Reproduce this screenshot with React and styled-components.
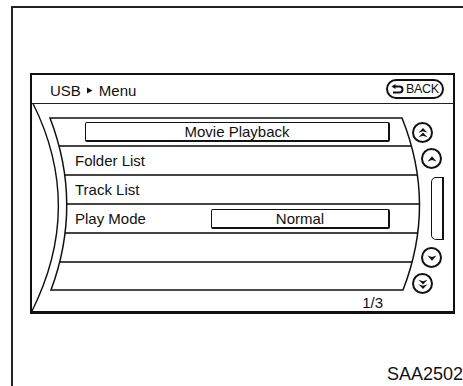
import styled, { createGlobalStyle } from "styled-components";

const GlobalStyle = createGlobalStyle`
  html, body { margin: 0; padding: 0; background: #fff; }
  body { font-family: "Liberation Sans", Arial, sans-serif; color: #111; }
`;

const rows = [
  { label: "", value: "Movie Playback", width: 305 },
  { label: "Folder List" },
  { label: "Track List" },
  { label: "Play Mode", value: "Normal", width: 179 },
  { label: "" },
  { label: "" },
];

function Arrow({ double, down }) {
  return (
    <svg width="12" height="12" viewBox="0 0 12 12" style={{ transform: down ? "rotate(180deg)" : "none" }}>
      {double ? (
        <>
          <path d="M6 1 L10.5 5.8 L6 4.3 L1.5 5.8 Z" fill="#111" />
          <path d="M6 5.5 L10.5 10.3 L6 8.8 L1.5 10.3 Z" fill="#111" />
        </>
      ) : (
        <path d="M6 3.2 L10.5 8.6 L6 7 L1.5 8.6 Z" fill="#111" />
      )}
    </svg>
  );
}

function BackIcon() {
  return (
    <svg width="13" height="11" viewBox="0 0 13 11">
      <path d="M4 2.5 H8.5 A3 3 0 0 1 8.5 8.5 H2" fill="none" stroke="#111" strokeWidth="2" />
      <path d="M0.5 2.5 L4.5 0 L4.5 5 Z" fill="#111" />
    </svg>
  );
}

export default function App() {
  return (
    <Page>
      <GlobalStyle />
      <Frame>
        <Screen>
          <Header>
            <Crumb>
              USB
              <svg width="6" height="7" viewBox="0 0 6 7" style={{ margin: "0 6px" }}>
                <path d="M0 0.5 L5.5 3.5 L0 6.5 Z" fill="#111" />
              </svg>
              Menu
            </Crumb>
            <BackButton>
              <BackIcon />
              BACK
            </BackButton>
          </Header>
          <Body>
            <List>
              {rows.map((r, i) => (
                <Row key={i}>
                  {r.label}
                  {r.value && <ValueBox $width={r.width}>{r.value}</ValueBox>}
                </Row>
              ))}
            </List>
            <PageCount>1/3</PageCount>
            <ScrollColumn>
              <ScrollButton $x={0} $gap={0}><Arrow double /></ScrollButton>
              <ScrollButton $x={9} $gap={5}><Arrow /></ScrollButton>
              <ScrollTrack />
              <ScrollButton $x={9} $gap={7}><Arrow down /></ScrollButton>
              <ScrollButton $x={0} $gap={5}><Arrow double down /></ScrollButton>
            </ScrollColumn>
          </Body>
          <Outline viewBox="32 75 421 236">
            <path d="M33 103.5 Q84.5 207 31.5 312" fill="none" stroke="#111" strokeWidth="1.4" />
            <path d="M50 118 L402 118 Q436.5 204 403 290 L51 290 Q83 204 50 118 Z" fill="none" stroke="#111" strokeWidth="1.5" />
          </Outline>
        </Screen>
        <Caption>SAA2502</Caption>
      </Frame>
    </Page>
  );
}

const Page = styled.div`
  width: 463px;
  height: 386px;
  box-sizing: border-box;
  padding: 6px 0 0 11px;
  overflow: hidden;
  background: #fff;
`;

const Frame = styled.div`
  height: 380px;
  box-sizing: border-box;
  border-top: 2px solid #222;
  border-left: 2px solid #222;
  padding: 65px 0 0 17px;
  display: flex;
  flex-direction: column;
`;

const Screen = styled.div`
  position: relative;
  width: 425px;
  height: 241px;
  box-sizing: border-box;
  border: 2px solid #111;
  border-bottom-width: 3px;
  display: flex;
  flex-direction: column;
`;

const Header = styled.div`
  height: 28px;
  flex-shrink: 0;
  border-bottom: 1px solid #222;
  display: flex;
  align-items: center;
  justify-content: space-between;
  padding: 0 9px 0 18px;
`;

const Crumb = styled.div`
  display: flex;
  align-items: center;
  font-size: 15px;
  padding-top: 2px;
`;

const BackButton = styled.div`
  height: 20px;
  width: 58px;
  box-sizing: border-box;
  border: 2px solid #111;
  border-radius: 10px;
  display: flex;
  align-items: center;
  gap: 2px;
  padding-left: 3px;
  font-size: 12.5px;
  letter-spacing: -0.3px;
`;

const Body = styled.div`
  flex: 1;
  display: grid;
  grid-template-columns: 370px auto;
  grid-template-rows: 172px auto;
  align-content: start;
  padding: 14px 0 0 18px;
`;

const List = styled.div`
  grid-column: 1;
  grid-row: 1;
  display: flex;
  flex-direction: column;
  clip-path: path("M0 0 L352 0 Q386.5 86 353 172 L1 172 Q33 86 0 0 Z");
`;

const Row = styled.div`
  flex: 1;
  display: flex;
  align-items: center;
  padding: 0 30px 0 25px;
  font-size: 15px;
  & + & {
    border-top: 2px solid #444;
  }
`;

const ValueBox = styled.div`
  margin-left: auto;
  width: ${(p) => p.$width}px;
  height: 20px;
  box-sizing: border-box;
  border: 1px solid #111;
  border-right-width: 2px;
  border-bottom-width: 2px;
  border-radius: 2px;
  display: flex;
  align-items: center;
  justify-content: center;
`;

const PageCount = styled.div`
  grid-column: 1;
  grid-row: 2;
  justify-self: end;
  margin: 4px 37px 0 0;
  font-size: 15px;
`;

const ScrollColumn = styled.div`
  grid-column: 2;
  grid-row: 1 / span 2;
  margin: 4px 0 0 -8px;
  display: flex;
  flex-direction: column;
`;

const ScrollButton = styled.div`
  width: 21px;
  height: 21px;
  box-sizing: border-box;
  border: 2px solid #111;
  border-radius: 50%;
  margin: ${(p) => p.$gap}px 0 0 ${(p) => p.$x}px;
  display: flex;
  align-items: center;
  justify-content: center;
`;

const ScrollTrack = styled.div`
  width: 13px;
  height: 63px;
  box-sizing: border-box;
  margin: 8px 0 0 19px;
  border: 1px solid #111;
  border-right-width: 2px;
  border-left-width: 1.5px;
  border-radius: 40% 0 0 40% / 8% 0 0 8%;
`;

const Outline = styled.svg`
  position: absolute;
  left: 0;
  top: 0;
  width: 421px;
  height: 236px;
  overflow: visible;
  pointer-events: none;
`;

const Caption = styled.div`
  margin-top: 51px;
  text-align: right;
  font-size: 18px;
  line-height: 18px;
`;
